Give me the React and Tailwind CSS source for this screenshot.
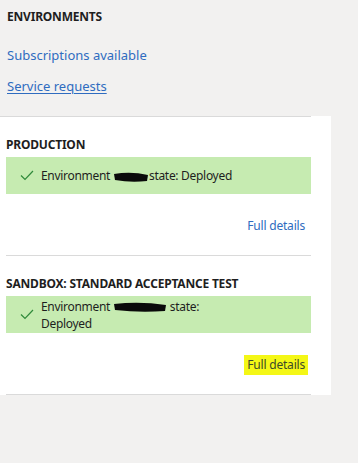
import React from 'react';

const Check = () => (
    <svg width="14" height="11" viewBox="0 0 14 11" className="shrink-0">
        <polyline points="1,5.5 5,9.5 13,1" fill="none" stroke="#2f8a3a" strokeWidth="1.2" />
    </svg>
);

// black marker scribble used to hide the environment name
const Redact = ({ w }) => (
    <svg width={w} height="12" viewBox={`0 0 ${w} 12`} className="inline-block align-middle">
        <path
            d={`M1 3 Q ${w / 2} 0 ${w - 1} 4 L ${w - 2} 10 Q ${w / 2} 12 2 9 Z`}
            fill="#0a0a0a"
        />
    </svg>
);

const EnvSection = ({ title, children, highlight }) => (
    <div className="ml-[6px] w-[305px]">
        <div className="pt-[20px] text-[12px] leading-[16px] font-bold text-[#1e1e1e] tracking-[-0.2px]">{title}</div>
        <div className="mt-[4px] h-[37px] bg-[#c6ebb1] flex items-center pl-[14px] pr-3 gap-[7px]">
            <Check />
            <div className="text-[12px] leading-[17px] text-[#1e1e1e] tracking-[-0.3px]">{children}</div>
        </div>
        <div className="mt-[24px] mb-[21px] pr-[6px] flex justify-end">
            <span
                className={`text-[12px] leading-[16px] tracking-[-0.2px] ${
                    highlight ? 'bg-[#f4f716] text-[#3d4a2a] px-[3px] py-[2px] -my-[2px] -mr-[3px]' : 'text-[#2f6cc0]'
                }`}
            >
                Full details
            </span>
        </div>
        <div className="h-px bg-[#dadada]" />
    </div>
);

export default function App() {
    return (
        <div className="w-[358px] h-[463px] bg-[#f2f1f0] font-['Noto_Sans','Open_Sans',sans-serif]">
            <div className="px-[7px] pt-[9px] h-[116px]">
                <div className="text-[12px] leading-[16px] font-bold text-[#1e1e1e] tracking-[-0.2px]">ENVIRONMENTS</div>
                <div className="mt-[21px] text-[13px] leading-[18px] text-[#2f6cc0]">Subscriptions available</div>
                <div className="mt-[13px] text-[13px] leading-[18px] text-[#2f6cc0] underline underline-offset-2">
                    Service requests
                </div>
            </div>

            <div className="w-[331px] bg-white">
                <div className="w-[311px] h-px bg-[#dadada]" />
                <EnvSection title="PRODUCTION">
                    Environment <Redact w={36} />state: Deployed
                </EnvSection>
                <EnvSection title="SANDBOX: STANDARD ACCEPTANCE TEST" highlight>
                    Environment <Redact w={54} /> state:
                    <br />
                    Deployed
                </EnvSection>
            </div>
        </div>
    );
}
